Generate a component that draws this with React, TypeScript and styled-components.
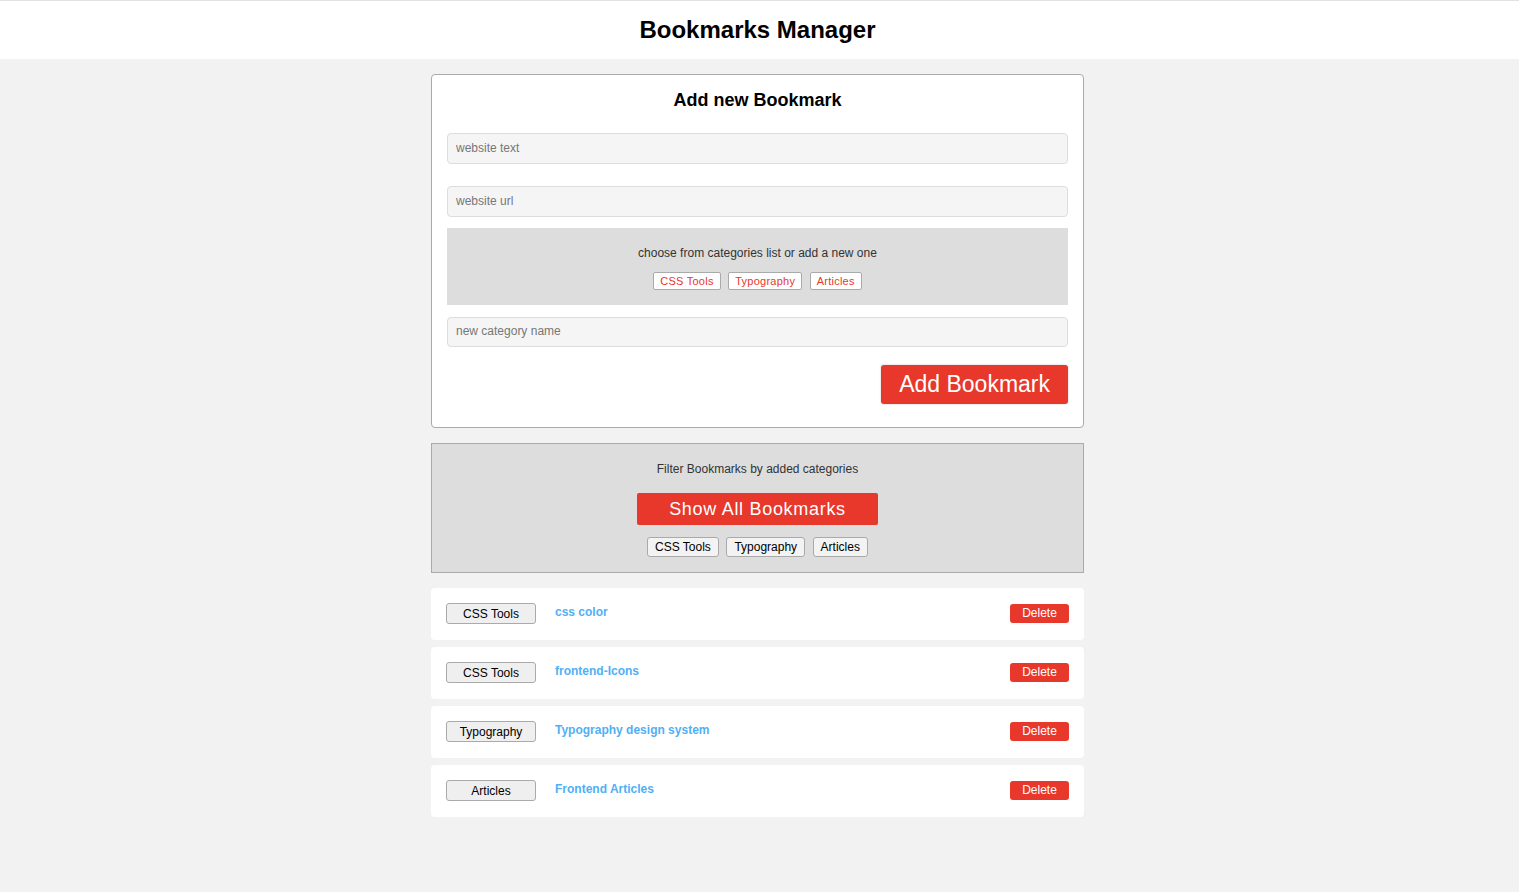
import React from "react";
import styled, { createGlobalStyle } from "styled-components";

const GlobalStyle = createGlobalStyle`
  * { box-sizing: border-box; }
  html, body {
    margin: 0;
    padding: 0;
    background: #f2f2f2;
    font-family: "Liberation Sans", Arial, sans-serif;
  }
`;

const Page = styled.div`
  border-top: 1px solid #e2e2e2;
  min-height: 892px;
  padding-right: 4px;
`;

const Header = styled.header`
  height: 58px;
  background: #fff;
  margin-right: -4px;
  padding-right: 4px;
  display: flex;
  align-items: center;
  justify-content: center;
`;

const Title = styled.h1`
  margin: 0;
  font-size: 24px;
  font-weight: 700;
  color: #000;
`;

const Main = styled.main`
  width: 653px;
  margin: 15px auto 0;
  display: flex;
  flex-direction: column;
`;

const Card = styled.section`
  background: #fff;
  border: 1px solid #aaa;
  border-radius: 4px;
  padding: 15px 15px 23px;
  display: flex;
  flex-direction: column;
`;

const CardTitle = styled.h2`
  margin: 0 0 22px;
  height: 21px;
  line-height: 21px;
  font-size: 18px;
  font-weight: 700;
  text-align: center;
  color: #000;
`;

const Input = styled.input<{ $h?: number; $mb?: number }>`
  width: 100%;
  height: ${(p) => p.$h ?? 31}px;
  margin-bottom: ${(p) => p.$mb ?? 0}px;
  background: #f5f5f5;
  border: 1px solid #ddd;
  border-radius: 4px;
  padding: 0 8px 2px;
  font-family: "Liberation Sans", Arial, sans-serif;
  font-size: 12px;
  color: #333;
  outline: none;
  &::placeholder { color: #777; }
`;

const CategoryBox = styled.div`
  background: #ddd;
  height: 77px;
  margin-bottom: 12px;
  display: flex;
  flex-direction: column;
  align-items: center;
  padding-top: 18px;
`;

const Hint = styled.p<{ $mb: number }>`
  margin: 0 0 ${(p) => p.$mb}px;
  font-size: 12px;
  line-height: 14px;
  color: #333;
`;

const TagRow = styled.div`
  display: flex;
  gap: 7.5px;
  justify-content: center;
`;

const PickTag = styled.button`
  height: 18px;
  padding: 0 6px;
  background: #fff;
  border: 1px solid #aaa;
  border-radius: 2px;
  color: #e8372b;
  font-family: "Liberation Sans", Arial, sans-serif;
  font-size: 11px;
  letter-spacing: 0.25px;
  line-height: 16px;
  cursor: pointer;
`;

const Actions = styled.div`
  display: flex;
  justify-content: flex-end;
  margin-top: 18px;
`;

const AddButton = styled.button`
  height: 39px;
  padding: 0 18px;
  background: #e8372b;
  color: #fff;
  border: none;
  border-radius: 3px;
  box-shadow: 0 0 2px rgba(0, 0, 0, 0.25);
  font-family: "Liberation Sans", Arial, sans-serif;
  font-size: 23px;
  cursor: pointer;
`;

const FilterBox = styled.section`
  margin-top: 15px;
  background: #ddd;
  border: 1px solid #aaa;
  padding: 18px 0 15px;
  display: flex;
  flex-direction: column;
  align-items: center;
`;

const ShowAllButton = styled.button`
  height: 32px;
  width: 241px;
  background: #e8372b;
  color: #fff;
  border: none;
  border-radius: 2px;
  font-family: "Liberation Sans", Arial, sans-serif;
  font-size: 18px;
  letter-spacing: 0.7px;
  margin-bottom: 12px;
  cursor: pointer;
`;

const FilterTag = styled.button`
  height: 20px;
  padding: 0 7px;
  background: #f3f3f3;
  border: 1px solid #aaa;
  border-radius: 3px;
  color: #000;
  font-family: "Liberation Sans", Arial, sans-serif;
  font-size: 12px;
  line-height: 18px;
  cursor: pointer;
`;

const List = styled.div`
  margin-top: 15px;
  display: flex;
  flex-direction: column;
  gap: 7.33px;
`;

const Row = styled.div`
  height: 51.67px;
  background: #fff;
  border-radius: 4px;
  padding: 0 15px;
  display: flex;
  align-items: center;
`;

const RowCategory = styled.button`
  width: 90px;
  height: 21px;
  background: #efefef;
  border: 1px solid #aaa;
  border-radius: 3px;
  color: #000;
  font-family: "Liberation Sans", Arial, sans-serif;
  font-size: 12px;
  padding: 0;
  cursor: pointer;
`;

const RowLink = styled.a`
  margin-left: 19px;
  margin-top: -4px;
  color: #4fb0f5;
  font-size: 12px;
  font-weight: 700;
  text-decoration: none;
  flex: 1;
`;

const DeleteButton = styled.button`
  width: 59px;
  height: 19px;
  background: #e8372b;
  color: #fff;
  border: none;
  border-radius: 3px;
  font-family: "Liberation Sans", Arial, sans-serif;
  font-size: 12px;
  padding: 0;
  margin-top: -1px;
  cursor: pointer;
`;

const categories = ["CSS Tools", "Typography", "Articles"];

const bookmarks = [
  { category: "CSS Tools", title: "css color" },
  { category: "CSS Tools", title: "frontend-Icons" },
  { category: "Typography", title: "Typography design system" },
  { category: "Articles", title: "Frontend Articles" },
];

export default function App() {
  return (
    <>
      <GlobalStyle />
      <Page>
        <Header>
          <Title>Bookmarks Manager</Title>
        </Header>
        <Main>
          <Card>
            <CardTitle>Add new Bookmark</CardTitle>
            <Input placeholder="website text" $mb={22} />
            <Input placeholder="website url" $mb={11} />
            <CategoryBox>
              <Hint $mb={12}>choose from categories list or add a new one</Hint>
              <TagRow>
                {categories.map((c) => (
                  <PickTag key={c}>{c}</PickTag>
                ))}
              </TagRow>
            </CategoryBox>
            <Input placeholder="new category name" $h={30} />
            <Actions>
              <AddButton>Add Bookmark</AddButton>
            </Actions>
          </Card>
          <FilterBox>
            <Hint $mb={17}>Filter Bookmarks by added categories</Hint>
            <ShowAllButton>Show All Bookmarks</ShowAllButton>
            <TagRow>
              {categories.map((c) => (
                <FilterTag key={c}>{c}</FilterTag>
              ))}
            </TagRow>
          </FilterBox>
          <List>
            {bookmarks.map((b, i) => (
              <Row key={i}>
                <RowCategory>{b.category}</RowCategory>
                <RowLink href="#">{b.title}</RowLink>
                <DeleteButton>Delete</DeleteButton>
              </Row>
            ))}
          </List>
        </Main>
      </Page>
    </>
  );
}
